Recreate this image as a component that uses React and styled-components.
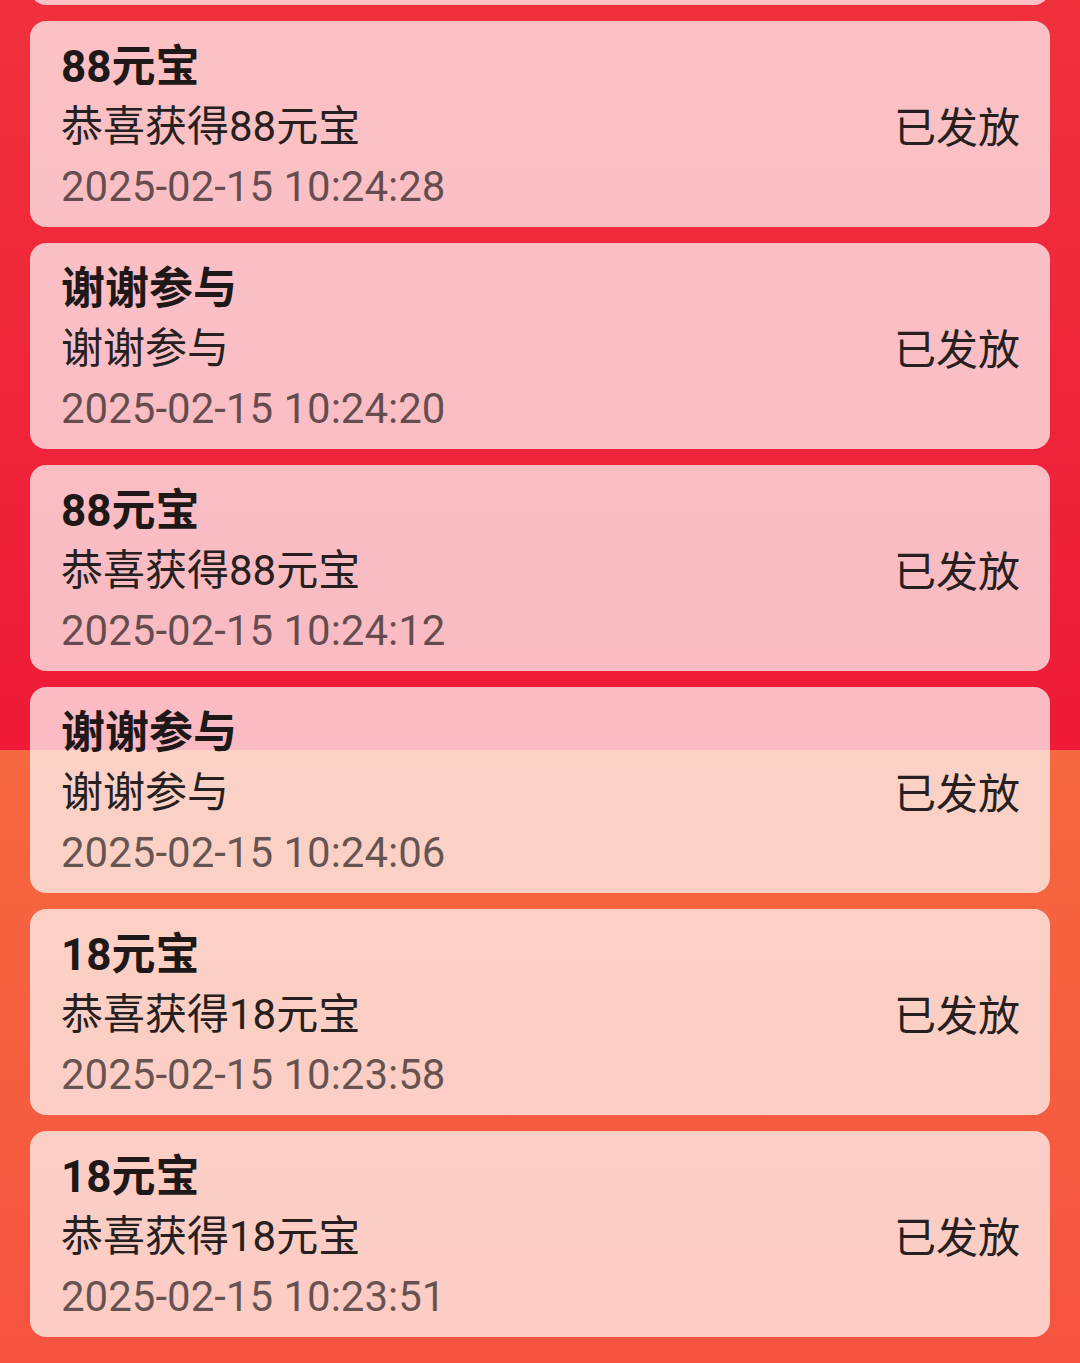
import styled, { createGlobalStyle } from 'styled-components';

const records = [
	{ title: '88元宝', desc: '恭喜获得88元宝', time: '2025-02-15 10:24:36' },
	{ title: '88元宝', desc: '恭喜获得88元宝', time: '2025-02-15 10:24:28' },
	{ title: '谢谢参与', desc: '谢谢参与', time: '2025-02-15 10:24:20' },
	{ title: '88元宝', desc: '恭喜获得88元宝', time: '2025-02-15 10:24:12' },
	{ title: '谢谢参与', desc: '谢谢参与', time: '2025-02-15 10:24:06' },
	{ title: '18元宝', desc: '恭喜获得18元宝', time: '2025-02-15 10:23:58' },
	{ title: '18元宝', desc: '恭喜获得18元宝', time: '2025-02-15 10:23:51' },
];

const App = () => {
	return (
		<>
			<GlobalStyle />
			<Page>
				<List>
					{records.map((r, i) => (
						<Card key={i}>
							<Info>
								<Title>{r.title}</Title>
								<Desc>{r.desc}</Desc>
								<Time>{r.time}</Time>
							</Info>
							<Status>已发放</Status>
						</Card>
					))}
				</List>
			</Page>
		</>
	);
};

// css
const GlobalStyle = createGlobalStyle`
	html, body {
		margin: 0;
		padding: 0;
	}
	body {
		font-family: Roboto, "Noto Sans CJK SC", sans-serif;
		color: #231a1a;
	}
`;

const Page = styled.div`
	height: 1363px;
	overflow: hidden;
	background: linear-gradient(
		180deg,
		#f0313c 0,
		#ee1a37 750px,
		#f6683f 750px,
		#f5533f 100%
	);
`;

// list is scrolled: the first card is mostly above the top edge
const List = styled.div`
	display: flex;
	flex-direction: column;
	gap: 16px;
	padding: 0 30px;
	margin-top: -201px;
`;

const Card = styled.div`
	display: flex;
	align-items: center;
	justify-content: space-between;
	padding: 16px 30px 10px 31px;
	border-radius: 16px;
	background: rgba(255, 255, 255, 0.7);
`;

const Info = styled.div`
	display: flex;
	flex-direction: column;
	font-size: 42px;
	line-height: 60px;
`;

const Title = styled.div`
	font-size: 44px;
	font-weight: 700;
	color: #1f1818;
`;

const Desc = styled.div`
	color: #262020;
`;

const Time = styled.div`
	color: rgba(0, 0, 0, 0.6);
`;

const Status = styled.div`
	font-size: 42px;
	line-height: 60px;
	color: #262020;
	margin-top: 4px;
`;

export default App;
